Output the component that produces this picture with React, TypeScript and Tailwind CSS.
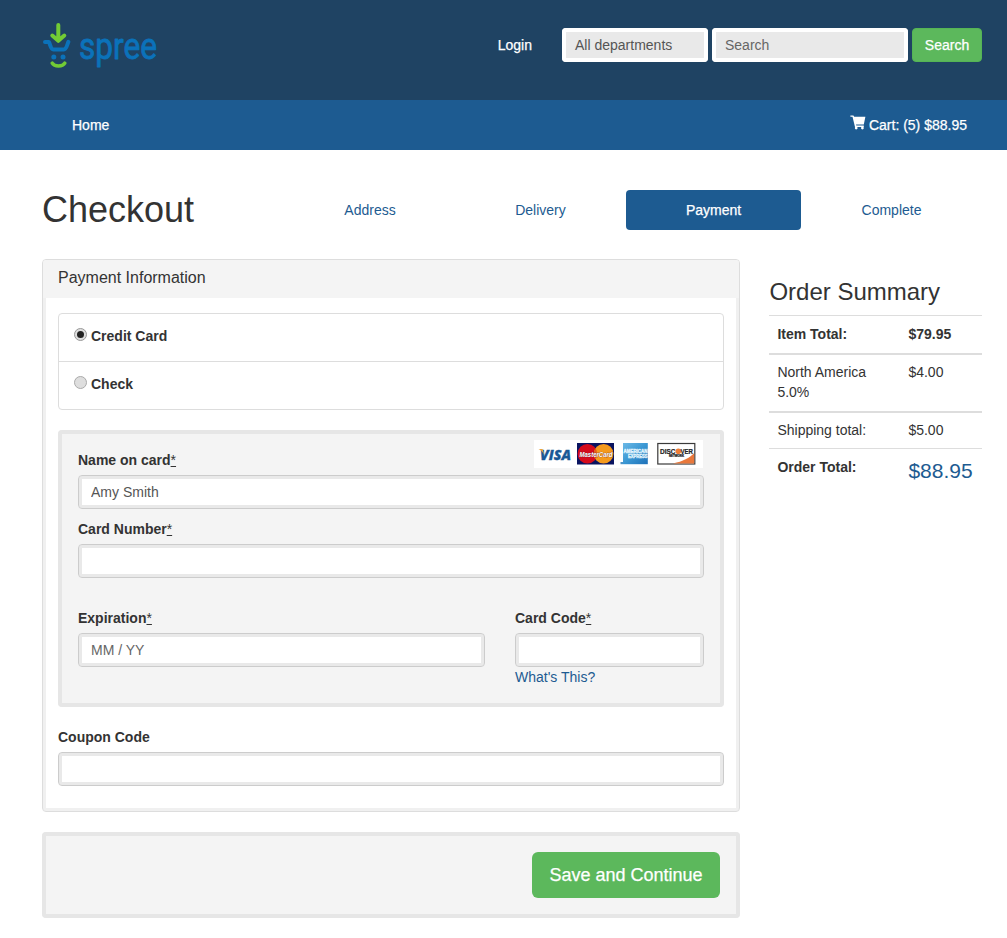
import React from "react";

const INPUT =
  "block h-[34px] w-full rounded border border-[#ccc] bg-white px-3 text-sm text-[#555] outline-none shadow-[inset_0_0_0_3px_#e9e9e9] placeholder:text-[#666]";

function Logo() {
  return (
    <svg width="124" height="60" viewBox="0 0 124 60" className="block overflow-visible" role="img" aria-label="Spree">
      <g fill="none" strokeLinecap="round" strokeLinejoin="round">
        <path d="M3 21H6.8C8.2 22.4 8.4 28.4 11.4 28.4H21.8C24.4 28.4 25 24.4 26.4 20.8" stroke="#0b72ba" strokeWidth="4" />
        <path d="M16.3 4V19M10.3 14.5L16.3 19.8L22.3 14.5" stroke="#72cb35" strokeWidth="4" />
        <path d="M10.2 42.2C12.4 45.9 20.6 45.9 22.8 42.2" stroke="#72cb35" strokeWidth="3.6" />
      </g>
      <circle cx="11.8" cy="36.1" r="2.5" fill="#0b72ba" />
      <circle cx="21" cy="36.1" r="2.5" fill="#0b72ba" />
      <text
        x="37"
        y="38"
        textLength="78"
        lengthAdjust="spacingAndGlyphs"
        fontFamily="Roboto, sans-serif"
        fontSize="36.5"
        fill="#0b72ba"
        stroke="#0b72ba"
        strokeWidth="0.8"
        strokeLinejoin="round"
      >
        spree
      </text>
    </svg>
  );
}

function CartIcon() {
  return (
    <svg width="16" height="15" viewBox="0 0 16 15" fill="#fff" className="mr-[3px] mb-[6px]">
      <path d="M0.4 0.4H3.4L4.2 1.8H15.4L13.8 9.4H6L6.3 10.4H13.8V12H5L2.5 1.8H0.4Z" />
      <circle cx="6.2" cy="13.1" r="1.4" />
      <circle cx="12.4" cy="13.1" r="1.4" />
    </svg>
  );
}

function CardBrands() {
  return (
    <svg width="169" height="28" viewBox="0 0 169 28" className="mr-px block shrink-0">
      <rect width="169" height="28" fill="#fff" />
      <text x="6" y="19.5" textLength="31" lengthAdjust="spacingAndGlyphs" fontFamily="Open Sans, sans-serif" fontWeight="800" fontStyle="italic" fontSize="14.5" fill="#1a5896" stroke="#1a5896" strokeWidth="0.3">VISA</text>
      <path d="M4.5 9H8.5L10.5 15.5C9.2 12.2 7.2 10.2 4.5 9Z" fill="#eaa33a" />

      <rect x="43" y="3" width="37" height="21.5" fill="#0a1460" />
      <circle cx="53.4" cy="13.8" r="9.8" fill="#d60b1c" />
      <circle cx="69.6" cy="13.8" r="9.8" fill="#f59a1c" />
      <path d="M61.5 8.3C63.6 11.5 63.6 16.1 61.5 19.3C59.4 16.1 59.4 11.5 61.5 8.3Z" fill="#e45a1c" />
      <text x="45.5" y="16.8" textLength="33" lengthAdjust="spacingAndGlyphs" fontFamily="Liberation Sans, sans-serif" fontWeight="700" fontStyle="italic" fontSize="8" fill="#fff" stroke="#5a2033" strokeWidth="0.5" paintOrder="stroke">MasterCard</text>

      <defs>
        <linearGradient id="amex" x1="0" y1="0" x2="1" y2="1">
          <stop offset="0" stopColor="#6cb9e6" />
          <stop offset="0.5" stopColor="#3a97d3" />
          <stop offset="1" stopColor="#1e70b8" />
        </linearGradient>
      </defs>
      <rect x="89" y="3" width="24.8" height="21.2" fill="url(#amex)" />
      <rect x="86.5" y="22" width="2.5" height="2.2" fill="#4d94c8" />
      <g fontFamily="Liberation Sans, sans-serif" fontWeight="700" fontSize="5.4" fill="#e3f4fc" stroke="#e3f4fc" strokeWidth="0.4">
        <text x="89.5" y="13" textLength="24" lengthAdjust="spacingAndGlyphs">AMERICAN</text>
        <text x="94" y="18" textLength="19.5" lengthAdjust="spacingAndGlyphs">EXPRESS</text>
      </g>

      <rect x="123.8" y="3.5" width="37" height="20.5" fill="#fff" stroke="#3a3a3a" strokeWidth="1.2" />
      <path d="M160.2 13V23.4H139C149 21.5 155.5 18 160.2 13Z" fill="#e9783b" />
      <g fontFamily="Liberation Sans, sans-serif" fontWeight="700" fill="#222" stroke="#222" strokeWidth="0.2">
        <text x="126" y="13.6" textLength="15.5" lengthAdjust="spacingAndGlyphs" fontSize="7">DISC</text>
        <circle cx="144.3" cy="11.2" r="2.8" fill="#ee7d36" stroke="none" />
        <text x="146.5" y="13.6" textLength="12.5" lengthAdjust="spacingAndGlyphs" fontSize="7">VER</text>
        <text x="135" y="17" textLength="15" lengthAdjust="spacingAndGlyphs" fontSize="2.6">NETWORK</text>
      </g>
    </svg>
  );
}

function Label({ text, required }: { text: string; required?: boolean }) {
  return (
    <label className="mb-[5px] block text-sm leading-5 font-bold">
      {text}
      {required && <abbr title="required" className="font-normal underline [text-decoration-style:solid]">*</abbr>}
    </label>
  );
}

function Radio({ checked, label }: { checked?: boolean; label: string }) {
  return (
    <label className="flex h-12 items-start px-[15px] pt-3 font-bold">
      <span className={`mt-[2px] mr-1 flex size-[13px] items-center justify-center rounded-full border bg-[#dedede] ${checked ? "border-[#999]" : "border-[#aaa]"}`}>
        {checked && <span className="size-[7px] rounded-full bg-[#222]" />}
      </span>
      {label}
    </label>
  );
}

export default function App() {
  return (
    <div className="h-[938px] overflow-hidden bg-white font-['Liberation_Sans',Arial,sans-serif] text-sm leading-5 text-[#333]">
      <header className="flex h-[100px] items-start justify-between bg-[#1f4363] pt-[21px] pr-[25px] pl-[42px]">
        <Logo />
        <div className="flex items-center pt-[7px] text-white">
          <a className="mr-[30px] [-webkit-text-stroke:0.25px_#fff]">Login</a>
          <div className="mr-1 flex h-[34px] w-[146px] items-center rounded bg-[#e9e9e9] px-[13px] text-[#555] shadow-[inset_0_0_0_4px_#fff]">All departments</div>
          <div className="mr-1 flex h-[34px] w-[196px] items-center rounded bg-[#e9e9e9] px-[13px] text-[#666] shadow-[inset_0_0_0_4px_#fff]">Search</div>
          <button className="h-[34px] w-[70px] rounded border border-[#55b555] bg-[#5cb85c] text-white [-webkit-text-stroke:0.25px_#fff]">Search</button>
        </div>
      </header>
      <nav className="flex h-[50px] items-center justify-between bg-[#1d5b91] pr-10 pl-[72px] text-white [-webkit-text-stroke:0.25px_#fff]">
        <a>Home</a>
        <a className="flex items-center">
          <CartIcon />
          Cart: (5) $88.95
        </a>
      </nav>

      <div className="flex h-20 items-center pt-10 pl-[42px] text-[#1d5b91]">
        <h1 className="w-[240px] text-[36px] leading-10 text-[#333]">Checkout</h1>
        <span className="w-44 text-center">Address</span>
        <span className="w-[165px] text-center">Delivery</span>
        <span className="ml-[3px] flex h-10 w-[175px] items-center justify-center rounded bg-[#1d5b91] text-white [-webkit-text-stroke:0.25px_#fff]">Payment</span>
        <span className="ml-[3px] w-[175px] text-center">Complete</span>
      </div>

      <div className="flex items-start gap-[29.4px] pt-[29px] pl-[42px]">
        <main className="w-[698px]">
          <section className="h-[553px] rounded border border-[#ddd] shadow-[inset_0_0_0_3px_#f0f0f0]">
            <h3 className="h-[38px] rounded-t-[3px] bg-[#f4f4f4] px-[15px] pt-[9px] text-base leading-[18px]">Payment Information</h3>
            <div className="px-[15px] pt-[15px]">
              <div className="h-[97px] rounded border border-[#ddd]">
                <Radio checked label="Credit Card" />
                <div className="-mt-px border-t border-[#ddd]">
                  <Radio label="Check" />
                </div>
              </div>

              <div className="mt-5 h-[277px] rounded bg-[#f4f4f4] px-5 pt-[10px] shadow-[inset_0_0_0_4px_#e6e6e6]">
                <div className="flex h-[35px] items-start justify-between">
                  <div className="pt-[10px]"><Label text="Name on card" required /></div>
                  <CardBrands />
                </div>
                <input className={INPUT} defaultValue="Amy Smith" />
                <div className="mt-[10px]">
                  <Label text="Card Number" required />
                  <input className={INPUT} />
                </div>
                <div className="mt-[30px] flex gap-[30px]">
                  <div className="w-[407px] shrink-0">
                    <Label text="Expiration" required />
                    <input className={INPUT} placeholder="MM / YY" />
                  </div>
                  <div className="min-w-0 flex-1">
                    <Label text="Card Code" required />
                    <input className={INPUT} />
                    <a className="block text-[#1d5b91]">What's This?</a>
                  </div>
                </div>
              </div>

              <div className="mt-5">
                <Label text="Coupon Code" />
                <input className={INPUT} />
              </div>
            </div>
          </section>

          <div className="mt-5 flex h-[86px] items-center justify-end rounded bg-[#f4f4f4] pr-5 shadow-[inset_0_0_0_4px_#e6e6e6]">
            <button className="h-[46px] w-[188px] rounded-md bg-[#5cb85c] text-lg text-white [-webkit-text-stroke:0.25px_#fff]">Save and Continue</button>
          </div>
        </main>

        <aside className="w-[212.6px] pt-[20px]">
          <h3 className="mb-[10px] text-2xl leading-[26px]">Order Summary</h3>
          <div className="flex h-[38px] border-t border-[#ddd] px-2 pt-2 font-bold">
            <span className="w-[131px]">Item Total:</span>
            <span>$79.95</span>
          </div>
          <div className="flex h-[58px] border-t-2 border-[#ddd] px-2 pt-[7px]">
            <span className="w-[131px] pr-8">North America 5.0%</span>
            <span>$4.00</span>
          </div>
          <div className="flex h-[37px] border-t-2 border-[#ddd] px-2 pt-[7px]">
            <span className="w-[131px]">Shipping total:</span>
            <span>$5.00</span>
          </div>
          <div className="flex border-t border-[#ddd] px-2 pt-2">
            <span className="w-[131px] font-bold">Order Total:</span>
            <span className="text-[21px] leading-7 text-[#1d5b91]">$88.95</span>
          </div>
        </aside>
      </div>
    </div>
  );
}
